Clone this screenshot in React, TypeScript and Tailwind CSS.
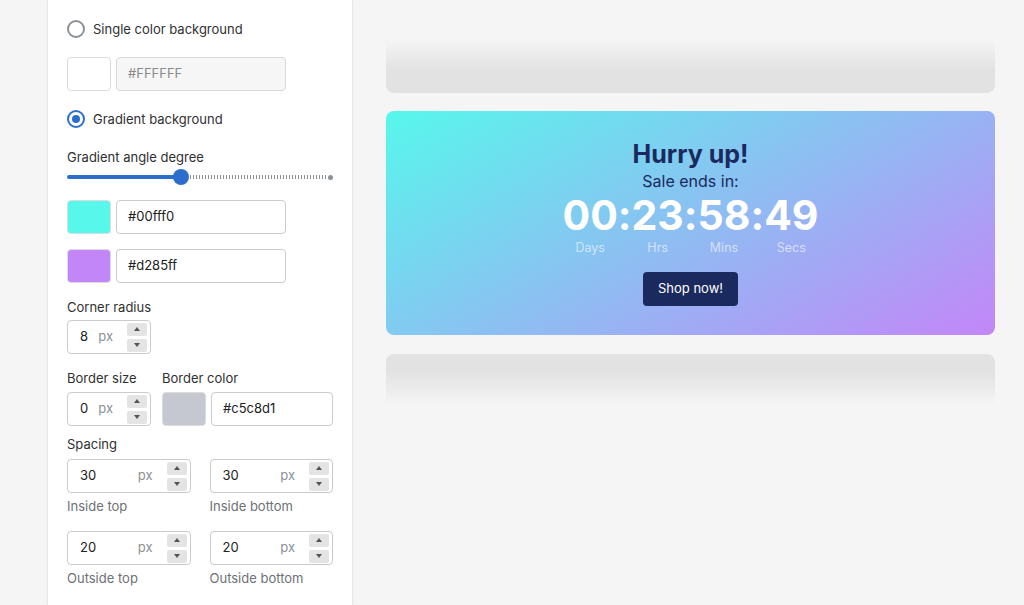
import React from "react";

const font = { fontFamily: "Inter, 'Noto Sans', sans-serif" };

function Radio({ checked, label }: { checked?: boolean; label: string }) {
  return (
    <div className="flex h-[20px] items-center">
      {checked ? (
        <span className="flex h-[18px] w-[18px] items-center justify-center rounded-full border-2 border-[#2c6ecb] bg-white">
          <span className="h-[8px] w-[8px] rounded-full bg-[#2c6ecb]" />
        </span>
      ) : (
        <span className="h-[18px] w-[18px] rounded-full border-2 border-[#8c9196] bg-white" />
      )}
      <span className="ml-[8px] text-[13px] leading-[20px] text-[#303030]">{label}</span>
    </div>
  );
}

function ColorRow({ color, value, disabled, wide }: { color: string; value: string; disabled?: boolean; wide?: boolean }) {
  return (
    <div className="flex h-[34px] gap-[5px]">
      <div
        className="h-[34px] w-[44px] rounded-[4px] border border-[#dcdcdc]"
        style={{ backgroundColor: color }}
      />
      <div
        className={`flex h-[34px] items-center rounded-[4px] border px-[11px] text-[13px] ${
          wide ? "flex-1" : "w-[170px]"
        } ${disabled ? "border-[#d9d9d9] bg-[#f6f6f6] text-[#8a8a8a]" : "border-[#c9cccf] bg-white text-[#202223]"}`}
      >
        {value}
      </div>
    </div>
  );
}

function Stepper() {
  return (
    <div className="flex w-[20px] flex-col gap-[3px]">
      <div className="flex h-[13px] items-center justify-center rounded-[2px] bg-[#e4e4e4]">
        <svg width="6" height="4" viewBox="0 0 6 4">
          <path d="M0 4 L3 0 L6 4 Z" fill="#555" />
        </svg>
      </div>
      <div className="flex h-[13px] items-center justify-center rounded-[2px] bg-[#e4e4e4]">
        <svg width="6" height="4" viewBox="0 0 6 4">
          <path d="M0 0 L3 4 L6 0 Z" fill="#555" />
        </svg>
      </div>
    </div>
  );
}

function NumInput({ value, width }: { value: string; width: string }) {
  return (
    <div className={`flex h-[34px] items-center rounded-[4px] border border-[#c9cccf] bg-white pl-[12px] pr-[3px] ${width}`}>
      <span className="flex-1 text-[13px] text-[#202223]">{value}</span>
      <span className="mr-[14px] text-[13px] text-[#8c9196]">px</span>
      <Stepper />
    </div>
  );
}

function Label({ children, className = "" }: { children: React.ReactNode; className?: string }) {
  return <div className={`h-[20px] text-[13px] leading-[20px] text-[#303030] ${className}`}>{children}</div>;
}

function Caption({ children }: { children: React.ReactNode }) {
  return <div className="mt-[3px] h-[20px] text-[13px] leading-[20px] text-[#6d7175]">{children}</div>;
}

function Unit({ n, label }: { n: string; label: string }) {
  return (
    <div className="flex flex-col items-center">
      <div className="h-[42px] text-[41px] font-bold leading-[42px] text-white">{n}</div>
      <div className="mt-[4px] h-[16px] text-[12.5px] leading-[16px] text-white/60">{label}</div>
    </div>
  );
}

function Colon() {
  return <div className="h-[42px] text-[41px] font-bold leading-[42px] text-white">:</div>;
}

export default function App() {
  return (
    <div className="flex h-[605px] w-[1024px] overflow-hidden bg-[#f5f5f5]" style={font}>
      {/* Left settings panel */}
      <div className="ml-[48px] h-full w-[304px] shrink-0 bg-white px-[19px] pt-[19px] shadow-[0_0_2px_rgba(0,0,0,0.18)]">
        <Radio label="Single color background" />
        <div className="mt-[18px]">
          <ColorRow color="#ffffff" value="#FFFFFF" disabled />
        </div>
        <div className="mt-[18px]">
          <Radio checked label="Gradient background" />
        </div>
        <Label className="mt-[18px]">Gradient angle degree</Label>
        {/* slider */}
        <div className="mt-[2px] flex h-[16px] items-center">
          <div className="h-[4px] w-[109px] rounded-l-full bg-[#2c6ecb]" />
          <div className="relative z-10 -mx-[3px] h-[16px] w-[16px] shrink-0 rounded-full bg-[#2c6ecb]" />
          <div className="ml-[4px] h-[4px] flex-1 bg-[repeating-linear-gradient(90deg,#8c9196_0px,#8c9196_1px,transparent_1px,transparent_3px)]" />
          <div className="h-[5px] w-[5px] rounded-full bg-[#8c9196]" />
        </div>
        <div className="mt-[15px]">
          <ColorRow color="#57f7ec" value="#00fff0" />
        </div>
        <div className="mt-[15px]">
          <ColorRow color="#c386f8" value="#d285ff" />
        </div>
        <Label className="mt-[14px]">Corner radius</Label>
        <div className="mt-[3px]">
          <NumInput value="8" width="w-[84px]" />
        </div>
        <div className="mt-[14px] flex gap-[11px]">
          <div>
            <Label>Border size</Label>
            <div className="mt-[4px]">
              <NumInput value="0" width="w-[84px]" />
            </div>
          </div>
          <div className="flex-1">
            <Label>Border color</Label>
            <div className="mt-[4px]">
              <ColorRow color="#c5c8d1" value="#c5c8d1" wide />
            </div>
          </div>
        </div>
        <Label className="mt-[8px]">Spacing</Label>
        <div className="mt-[5px] grid grid-cols-2 gap-x-[19px]">
          <div>
            <NumInput value="30" width="w-full" />
            <Caption>Inside top</Caption>
          </div>
          <div>
            <NumInput value="30" width="w-full" />
            <Caption>Inside bottom</Caption>
          </div>
        </div>
        <div className="mt-[15px] grid grid-cols-2 gap-x-[19px]">
          <div>
            <NumInput value="20" width="w-full" />
            <Caption>Outside top</Caption>
          </div>
          <div>
            <NumInput value="20" width="w-full" />
            <Caption>Outside bottom</Caption>
          </div>
        </div>
      </div>

      {/* Preview */}
      <div className="flex-1 pl-[34px] pr-[29px]">
        <div className="mt-[40px] h-[53px] rounded-b-[8px] bg-[linear-gradient(to_bottom,#f5f5f5,#e2e2e2_57%)]" />
        <div className="mt-[18px] flex h-[224px] flex-col items-center rounded-[8px] bg-[linear-gradient(150deg,#57f7ec,#c386f8)] pt-[29px]">
          <div className="h-[28px] text-[25px] font-bold leading-[28px] text-[#1b2a5e]">Hurry up!</div>
          <div className="mt-[2px] h-[22px] text-[16px] leading-[22px] text-[#1b2a5e]">Sale ends in:</div>
          <div className="mt-[2px] flex items-start">
            <Unit n="00" label="Days" />
            <Colon />
            <Unit n="23" label="Hrs" />
            <Colon />
            <Unit n="58" label="Mins" />
            <Colon />
            <Unit n="49" label="Secs" />
          </div>
          <button className="mt-[16px] h-[34px] rounded-[4px] bg-[#1b2a5e] px-[15px] text-[13px] text-white">
            Shop now!
          </button>
        </div>
        <div className="mt-[19px] h-[51px] rounded-t-[8px] bg-[linear-gradient(to_bottom,#e2e2e2_35%,#f5f5f5)]" />
      </div>
    </div>
  );
}
